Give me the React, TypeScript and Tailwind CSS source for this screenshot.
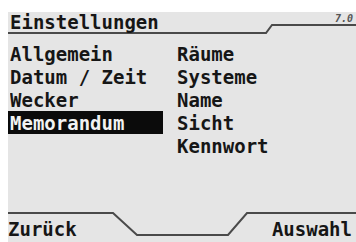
import React from 'react';

const LEFT = ['Allgemein', 'Datum / Zeit', 'Wecker', 'Memorandum'];
const RIGHT = ['Räume', 'Systeme', 'Name', 'Sicht', 'Kennwort'];
const SELECTED = 'Memorandum';

const lcd = { fontFamily: '"DejaVu Sans Mono", "Liberation Mono", monospace' };

// the LCD font is a little taller than DejaVu Mono
function Txt({ children }: { children: React.ReactNode }) {
  return (
    <span className="inline-block origin-center scale-y-[1.04] text-[19px] font-bold leading-[22px]">
      {children}
    </span>
  );
}

export default function App() {
  return (
    <div className="h-[242px] w-[356px] overflow-hidden bg-white pl-[8px] pt-[12px]" style={lcd}>
      <div className="flex h-[230px] flex-col bg-[#e5e5e5] text-[#161616]">
        {/* header */}
        <div className="relative h-[26px] shrink-0">
          <svg className="absolute left-0 top-0" width="348" height="30" fill="none">
            <path d="M0 21 H258 L264 13 H348" stroke="#4a4a4a" strokeWidth="2" />
          </svg>
          <div className="absolute left-[2px] top-[0px] flex h-[20px] items-center">
            <Txt>Einstellungen</Txt>
          </div>
          <span className="absolute right-[3px] top-[1px] text-[10px] font-bold italic leading-[12px] text-[#555]">7.0</span>
        </div>

        {/* menu */}
        <div className="mt-[4px] flex flex-1 gap-[6px]">
          <div className="flex w-[155px] flex-col">
            {LEFT.map((item) => (
              <div
                key={item}
                className={
                  item === SELECTED
                    ? 'flex h-[23px] items-center bg-[#0b0b0b] pl-[2px] text-[#f2f2f2]'
                    : 'flex h-[23px] items-center pl-[2px]'
                }
              >
                <Txt>{item}</Txt>
              </div>
            ))}
          </div>
          <div className="flex flex-col pl-[8px]">
            {RIGHT.map((item) => (
              <div key={item} className="flex h-[23px] items-center">
                <Txt>{item}</Txt>
              </div>
            ))}
          </div>
        </div>

        {/* soft keys */}
        <div className="relative h-[31px] shrink-0">
          <svg className="absolute left-0 top-0" width="348" height="31" fill="none">
            <path d="M0 2 H105 L129 24 H220 L239 2 H348" stroke="#4a4a4a" strokeWidth="2" />
          </svg>
          <div className="flex h-full items-end justify-between pb-[2px] pr-[4px]">
            <Txt>Zurück</Txt>
            <Txt>Auswahl</Txt>
          </div>
        </div>
      </div>
    </div>
  );
}
